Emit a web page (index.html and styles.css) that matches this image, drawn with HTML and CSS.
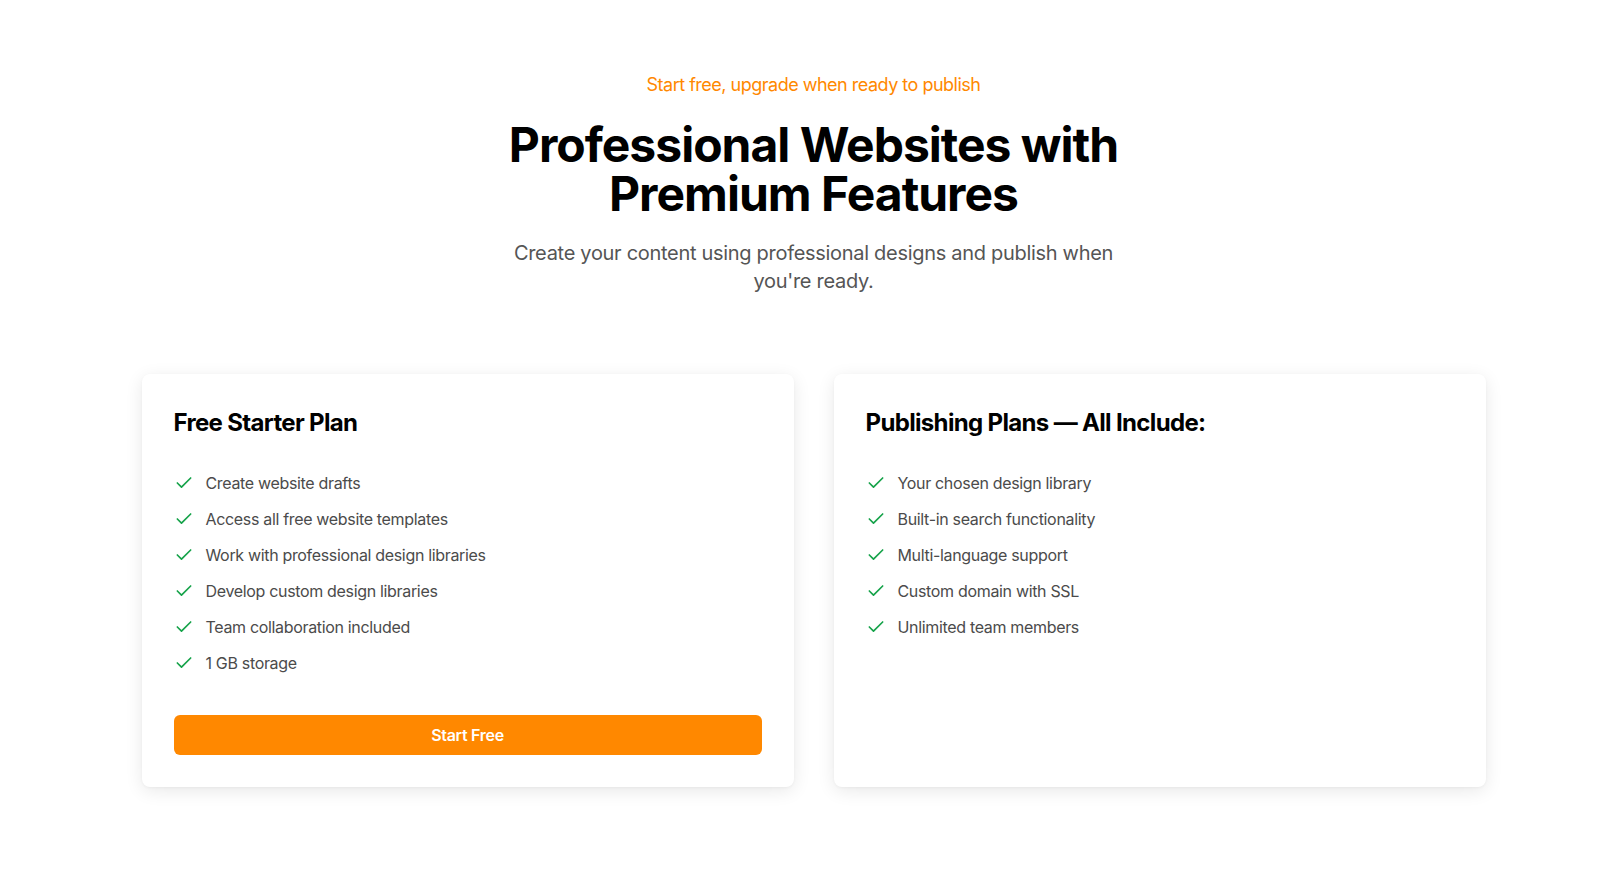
FILE: index.html
```
<!DOCTYPE html>
<html lang="en">
<head>
<meta charset="utf-8">
<title>Pricing</title>
<link rel="stylesheet" href="styles.css">
</head>
<body>
<main class="pricing">
  <header class="intro">
    <p class="eyebrow">Start free, upgrade when ready to publish</p>
    <h1 class="headline">Professional Websites with<br>Premium Features</h1>
    <p class="lead">Create your content using professional designs and publish when you're ready.</p>
  </header>
  <section class="plans">
    <article class="card">
      <h2 class="card-title">Free Starter Plan</h2>
      <ul class="features">
        <li class="feature"><svg class="check" viewBox="0 0 24 24"><polyline points="20 6 9 17 4 12"/></svg><span>Create website drafts</span></li>
        <li class="feature"><svg class="check" viewBox="0 0 24 24"><polyline points="20 6 9 17 4 12"/></svg><span>Access all free website templates</span></li>
        <li class="feature"><svg class="check" viewBox="0 0 24 24"><polyline points="20 6 9 17 4 12"/></svg><span>Work with professional design libraries</span></li>
        <li class="feature"><svg class="check" viewBox="0 0 24 24"><polyline points="20 6 9 17 4 12"/></svg><span>Develop custom design libraries</span></li>
        <li class="feature"><svg class="check" viewBox="0 0 24 24"><polyline points="20 6 9 17 4 12"/></svg><span>Team collaboration included</span></li>
        <li class="feature"><svg class="check" viewBox="0 0 24 24"><polyline points="20 6 9 17 4 12"/></svg><span>1 GB storage</span></li>
      </ul>
      <button class="btn">Start Free</button>
    </article>
    <article class="card">
      <h2 class="card-title">Publishing Plans — All Include:</h2>
      <ul class="features">
        <li class="feature"><svg class="check" viewBox="0 0 24 24"><polyline points="20 6 9 17 4 12"/></svg><span>Your chosen design library</span></li>
        <li class="feature"><svg class="check" viewBox="0 0 24 24"><polyline points="20 6 9 17 4 12"/></svg><span>Built-in search functionality</span></li>
        <li class="feature"><svg class="check" viewBox="0 0 24 24"><polyline points="20 6 9 17 4 12"/></svg><span>Multi-language support</span></li>
        <li class="feature"><svg class="check" viewBox="0 0 24 24"><polyline points="20 6 9 17 4 12"/></svg><span>Custom domain with SSL</span></li>
        <li class="feature"><svg class="check" viewBox="0 0 24 24"><polyline points="20 6 9 17 4 12"/></svg><span>Unlimited team members</span></li>
      </ul>
    </article>
  </section>
</main>
</body>
</html>
```
FILE: styles.css
```
* { box-sizing: border-box; }
html, body { margin: 0; padding: 0; background: #ffffff; }
body {
  font-family: Inter, "Noto Sans", "Liberation Sans", sans-serif;
  color: #111;
}
.pricing {
  padding: 71px 0 80px 4px;
}
.intro {
  display: flex;
  flex-direction: column;
  align-items: center;
  text-align: center;
}
.eyebrow {
  margin: 0;
  font-size: 18px;
  line-height: 28px;
  color: #ff8800;
  letter-spacing: -0.5px;
}
.headline {
  margin: 21px 0 0;
  font-size: 48px;
  line-height: 49px;
  font-weight: 700;
  color: #000;
  letter-spacing: -1px;
}
.lead {
  margin: 21px 0 0;
  max-width: 620px;
  font-size: 20px;
  line-height: 28px;
  color: #555;
  letter-spacing: -0.3px;
}
.plans {
  display: grid;
  grid-template-columns: 1fr 1fr;
  gap: 40px;
  max-width: 1344px;
  margin: 79px auto 0;
}
.card {
  background: #fff;
  border-radius: 8px;
  padding: 33px 32px 32px;
  box-shadow: 0 4px 18px rgba(0, 0, 0, 0.09), 0 1px 3px rgba(0, 0, 0, 0.04);
  display: flex;
  flex-direction: column;
}
.card-title {
  margin: 0;
  font-size: 24px;
  line-height: 32px;
  font-weight: 700;
  color: #000;
  letter-spacing: -0.66px;
}
.features {
  list-style: none;
  margin: 32px 0 0;
  padding: 0;
  display: flex;
  flex-direction: column;
  gap: 12px;
}
.feature {
  display: flex;
  align-items: center;
  gap: 12px;
  font-size: 16px;
  line-height: 24px;
  color: #4b4b4b;
  letter-spacing: -0.33px;
}
.check {
  width: 20px;
  height: 20px;
  flex: none;
  fill: none;
  stroke: #16a34a;
  stroke-width: 2;
  stroke-linecap: round;
  stroke-linejoin: round;
}
.btn {
  margin-top: 40px;
  height: 40px;
  border: 0;
  border-radius: 6px;
  background: #ff8800;
  color: #fff;
  font-family: inherit;
  font-size: 16px;
  font-weight: 600;
  letter-spacing: -0.3px;
  cursor: pointer;
}
```
